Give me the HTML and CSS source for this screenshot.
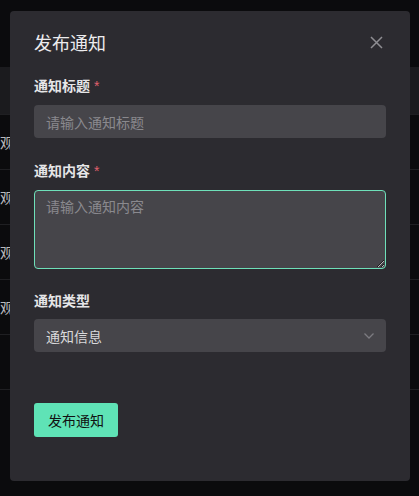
FILE: index.html
```html
<!DOCTYPE html>
<html lang="zh-CN">

<head>
  <meta charset="UTF-8">
  <title>发布通知</title>
  <meta name="viewport" content="width=device-width, initial-scale=1.0">
  <link rel="stylesheet" href="styles.css">
</head>

<body>
  <!-- page behind the modal -->
  <div class="page">
    <div class="topbar"></div>
    <div class="table">
      <div class="thead"></div>
      <div class="row"><span class="cell">观看</span></div>
      <div class="row"><span class="cell">观看</span></div>
      <div class="row"><span class="cell">观看</span></div>
      <div class="row"><span class="cell">观看</span></div>
      <div class="row"></div>
    </div>
  </div>

  <div class="mask">
    <div class="dialog">
      <header class="dialog-head">
        <h2>发布通知</h2>
        <button class="close" title="关闭">
          <svg width="13" height="13" viewBox="0 0 13 13">
            <path d="M1 1L12 12M12 1L1 12" stroke="currentColor" stroke-width="1.5" fill="none" />
          </svg>
        </button>
      </header>
      <form class="dialog-body">
        <div class="item">
          <label for="title">通知标题<i>*</i></label>
          <input id="title" type="text" placeholder="请输入通知标题">
        </div>
        <div class="item">
          <label for="content">通知内容<i>*</i></label>
          <textarea id="content" placeholder="请输入通知内容"></textarea>
        </div>
        <div class="item">
          <label for="type">通知类型</label>
          <div class="select" id="type">
            <span>通知信息</span>
            <svg width="10" height="6" viewBox="0 0 10 6">
              <path d="M0.5 0.5L5 5L9.5 0.5" stroke="currentColor" stroke-width="1.3" fill="none" />
            </svg>
          </div>
        </div>
        <div class="foot">
          <button type="button" class="primary">发布通知</button>
        </div>
      </form>
    </div>
  </div>
</body>

</html>
```

FILE: styles.css
```css
:root {
  --page-bg: #0b0b0d;
  --head-bg: #1b1b1e;
  --line: #1f1f22;
  --dialog-bg: #2c2b30;
  --field-bg: #46454a;
  --text: #e6e6e8;
  --muted: #8a898e;
  --accent: #5fe3b6;
  --danger: #e0606e;
}

* {
  box-sizing: border-box;
}

body {
  margin: 0;
  background-color: var(--page-bg);
  font-family: "Noto Sans CJK SC", "Noto Sans", sans-serif;
  color: var(--text);
  overflow: hidden;
}

/* page behind */
.topbar {height: 67px}
.thead {
  height: 48px;
  background-color: var(--head-bg);
  border-bottom: 1px solid var(--line);
}
.row {
  height: 55px;
  border-bottom: 1px solid var(--line);
  display: flex;
  align-items: center;
}
.cell {
  font-size: 14px;
  color: #b8b8bc;
  white-space: nowrap;
}

/* modal */
.mask {
  position: fixed;
  inset: 0;
}
.dialog {
  width: 400px;
  margin: 11px 0 0 10px;
  padding: 19px 24px 44px;
  background-color: var(--dialog-bg);
  border-radius: 4px;
}
.dialog-head {
  display: flex;
  justify-content: space-between;
  align-items: center;
}
.dialog-head h2 {
  margin: 0;
  font-size: 18px;
  line-height: 24px;
  font-weight: 400;
  color: #ececee;
}
.close {
  display: flex;
  padding: 0;
  margin: 1px 3px 0 0;
  border: none;
  background: none;
  color: #8e8d92;
  cursor: pointer;
}

.dialog-body {margin-top: 20px}
.item {margin-bottom: 21px}
.item:nth-child(2) {margin-bottom: 20px}
.item label {
  display: block;
  margin-bottom: 8px;
  font-size: 14px;
  line-height: 22px;
  font-weight: 600;
  color: var(--text);
}
.item label i {
  font-style: normal;
  font-family: "Liberation Sans", sans-serif;
  font-weight: 400;
  color: var(--danger);
  margin-left: 4px;
}

input, textarea, .select {
  display: block;
  width: 100%;
  font-family: inherit;
  font-size: 14px;
  color: #d9d9db;
  background-color: var(--field-bg);
  border: 1px solid transparent;
  border-radius: 4px;
  outline: none;
}
input {
  height: 33px;
  padding: 0 11px;
}
textarea {
  height: 79px;
  padding: 5px 11px;
  line-height: 20px;
  border-color: #6ee0b9;
  resize: vertical;
}
input::placeholder, textarea::placeholder {color: var(--muted)}

.select {
  height: 33px;
  padding: 0 11px;
  display: flex;
  align-items: center;
  justify-content: space-between;
}
.select svg {color: #7c7b81}

.foot {padding-top: 30px}
.primary {
  height: 34px;
  padding: 0 14px;
  font-family: inherit;
  font-size: 14px;
  color: #111;
  background-color: var(--accent);
  border: none;
  border-radius: 3px;
  cursor: pointer;
}
```
